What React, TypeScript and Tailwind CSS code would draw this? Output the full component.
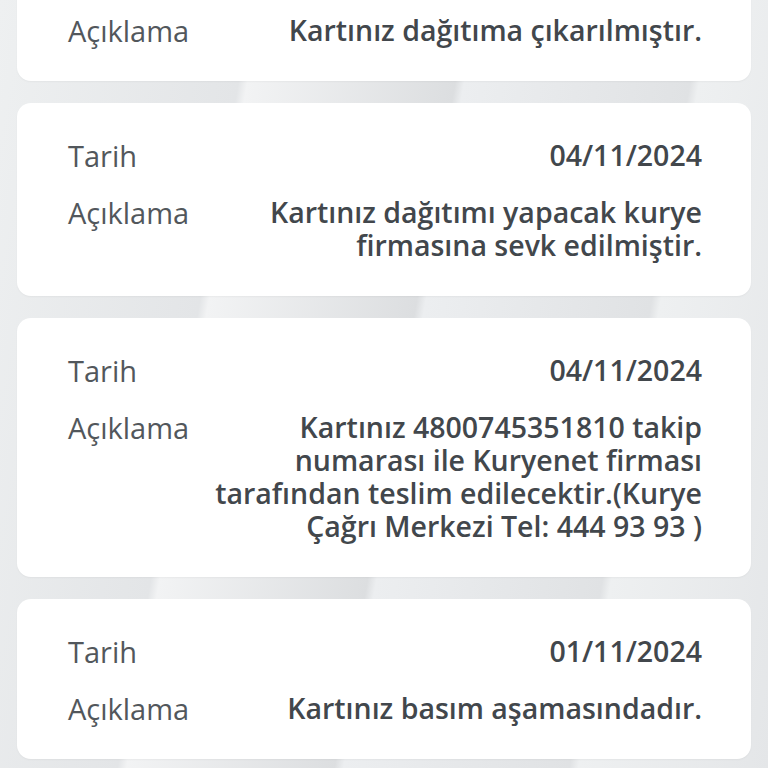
const items = [
  { date: "04/11/2024", text: "Kartınız dağıtıma çıkarılmıştır." },
  { date: "04/11/2024", text: "Kartınız dağıtımı yapacak kurye firmasına sevk edilmiştir." },
  {
    date: "04/11/2024",
    text: "Kartınız 4800745351810 takip numarası ile Kuryenet firması tarafından teslim edilecektir.(Kurye Çağrı Merkezi Tel: 444 93 93 )",
  },
  { date: "01/11/2024", text: "Kartınız basım aşamasındadır." },
];

function Row({ label, children }: { label: string; children: React.ReactNode }) {
  return (
    <div className="flex items-start justify-between gap-6">
      <span className="shrink-0 text-[29px] font-normal text-[#52575c]">{label}</span>
      <span className="text-right text-[28.5px] font-semibold text-[#42474c]">{children}</span>
    </div>
  );
}

export default function App() {
  return (
    <div
      className="h-[768px] w-[768px] overflow-hidden bg-[linear-gradient(100deg,#eef0f1_0%,#e3e5e7_28%,#f2f3f4_29%,#dcdee0_52%,#eceef0_53%,#e0e2e4_78%,#eef0f1_79%,#e4e6e8_100%)]"
      style={{ fontFamily: '"Open Sans", "Liberation Sans", sans-serif' }}
    >
      {/* liste kaydırılmış halde: ilk kartın üst kısmı ekranın dışında */}
      <div className="-mt-[79px] flex flex-col gap-[22px] px-[17px]">
        {items.map((it, i) => (
          <div
            key={i}
            className="flex flex-col gap-[24px] rounded-[14px] bg-white pl-[51px] pr-[49px] pt-[36px] pb-[34px] leading-[33px] shadow-[0_1px_2px_rgba(0,0,0,0.04)]"
          >
            <Row label="Tarih">{it.date}</Row>
            <Row label="Açıklama">{it.text}</Row>
          </div>
        ))}
      </div>
    </div>
  );
}
